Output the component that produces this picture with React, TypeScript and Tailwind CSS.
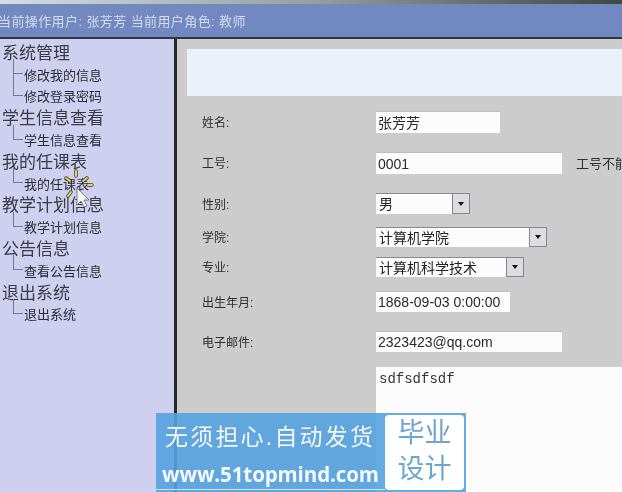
// Teacher info page: header strip, tree menu on the left, profile form on the right

const menu = [
  { title: "系统管理", items: ["修改我的信息", "修改登录密码"] },
  { title: "学生信息查看", items: ["学生信息查看"] },
  { title: "我的任课表", items: ["我的任课表"] },
  { title: "教学计划信息", items: ["教学计划信息"] },
  { title: "公告信息", items: ["查看公告信息"] },
  { title: "退出系统", items: ["退出系统"] },
];

function TreeItem({ label, first }: { label: string; first: boolean }) {
  return (
    <div className="relative h-[21.8px] pl-6 flex items-center text-[13px] leading-none text-[#2b2b33]">
      {/* tree connector */}
      <span
        className={
          first
            ? "absolute left-[13px] top-[-5px] h-[15px] w-[10px] border-l border-b border-[#777788]"
            : "absolute left-[13px] top-[-12px] h-[22px] w-[10px] border-l border-b border-[#777788]"
        }
      />
      <span>{label}</span>
    </div>
  );
}

function Sidebar() {
  return (
    <div className="w-[174px] shrink-0 bg-[#cfd0ef] pt-[3.5px] overflow-hidden">
      {menu.map((group) => (
        <div key={group.title}>
          <div className="h-[21.8px] pl-0.5 flex items-center text-[17px] leading-none text-[#3a3a44]">
            {group.title}
          </div>
          {group.items.map((item, i) => (
            <TreeItem key={item} label={item} first={i === 0} />
          ))}
        </div>
      ))}
    </div>
  );
}

function Label({ children }: { children: string }) {
  return <div className="w-[174px] shrink-0 pt-0.5 text-xs text-[#2e2e2e]">{children}</div>;
}

function Input({ value, width }: { value: string; width: string }) {
  return (
    <div className={`${width} shrink-0 h-full bg-[#fcfcfc] border-t border-[#bdbdbd] pl-0.5 flex items-center text-sm text-[#2a2a2a]`}>
      {value}
    </div>
  );
}

function Select({ value, width }: { value: string; width: string }) {
  return (
    <div className="flex h-full shrink-0">
      <div className={`${width} bg-[#fcfcfc] border-t border-[#8a8a8a] pl-[3px] flex items-center text-sm text-[#222]`}>
        {value}
      </div>
      <div className="w-[18px] bg-[#dcdce2] border border-[#85858d] flex items-center justify-center">
        <span className="w-0 h-0 border-x-[3px] border-x-transparent border-t-[4px] border-t-[#111]" />
      </div>
    </div>
  );
}

function Form() {
  return (
    <div className="flex-1 min-w-0 pl-2.5 pt-2.5 bg-[#cccccc] overflow-hidden">
      <div className="h-[47px] bg-[#eaf1f8]" />
      <div className="pl-[15px]">
        <div className="mt-[15px] h-[22px] flex items-center">
          <Label>姓名:</Label>
          <Input value="张芳芳" width="w-[124px]" />
        </div>
        <div className="mt-[19px] h-[22px] flex items-center">
          <Label>工号:</Label>
          <Input value="0001" width="w-[186px]" />
          <span className="ml-3.5 pt-0.5 text-[13px] whitespace-nowrap text-[#2e2e2e]">工号不能修改</span>
        </div>
        <div className="mt-[19px] h-[21px] flex items-center">
          <Label>性别:</Label>
          <Select value="男" width="w-[76px]" />
        </div>
        <div className="mt-[13px] h-5 flex items-center">
          <Label>学院:</Label>
          <Select value="计算机学院" width="w-[153px]" />
        </div>
        <div className="mt-2.5 h-5 flex items-center">
          <Label>专业:</Label>
          <Select value="计算机科学技术" width="w-[130px]" />
        </div>
        <div className="mt-3.5 h-[21px] flex items-center">
          <Label>出生年月:</Label>
          <Input value="1868-09-03 0:00:00" width="w-[134px]" />
        </div>
        <div className="mt-[19px] h-[21px] flex items-center">
          <Label>电子邮件:</Label>
          <Input value="2323423@qq.com" width="w-[186px]" />
        </div>
        <div className="mt-[15px] flex">
          <div className="w-[174px] shrink-0" />
          <div className="flex-1 h-[140px] bg-[#fcfcfc] pl-[3px] pt-0.5 font-['Liberation_Mono',monospace] text-sm leading-5 text-[#333]">
            sdfsdfsdf
          </div>
        </div>
      </div>
    </div>
  );
}

export default function App() {
  return (
    <div className="relative w-[622px] h-[492px] overflow-hidden flex flex-col bg-[#cccccc] blur-[0.5px] font-['Liberation_Sans','Noto_Sans_CJK_SC',sans-serif]">
      <div className="h-1 shrink-0 bg-gradient-to-r from-[#d5dee4] via-[#93a29f] to-[#3c4a44]" />
      <div className="h-[35px] shrink-0 bg-[#7288c0] border-b-2 border-[#2e3646] flex items-center overflow-hidden">
        <div className="ml-[-2px] pt-[3px] text-[13px] tracking-[0.4px] whitespace-nowrap text-[#d4dcf0]">当前操作用户:&nbsp;张芳芳 当前用户角色:&nbsp;教师</div>
      </div>
      <div className="flex-1 min-h-0 flex">
        <Sidebar />
        <div className="w-[3px] shrink-0 bg-[#26262c]" />
        <Form />
      </div>

      {/* mouse cursor with click sparkle over the menu */}
      <svg className="absolute left-[60px] top-[168px]" width="36" height="42" viewBox="0 0 36 42">
        <g strokeLinecap="round">
          <g stroke="#3a3a2a" strokeWidth="3.5">
            <path d="M16 3v5" />
            <path d="M6 10l4 3" />
            <path d="M27 10l-4 3" />
            <path d="M32 17h-4" />
            <path d="M8 28l3-4" />
          </g>
          <g stroke="#e6d65a" strokeWidth="2">
            <path d="M16 3v5" />
            <path d="M6 10l4 3" />
            <path d="M27 10l-4 3" />
            <path d="M32 17h-4" />
            <path d="M8 28l3-4" />
          </g>
        </g>
        <path d="M17 20v17l4-4 3 6 3-1-3-6h5z" fill="#f6f6fa" stroke="#66666f" strokeWidth="0.8" />
      </svg>

      {/* site watermark */}
      <div className="absolute left-[156px] top-[413px] w-[310px] h-[79px] bg-[#57a2e0]/90 flex">
        <div className="w-[229px] shrink-0 text-[#f4f8fc]">
          <div className="mt-2 pl-[9px] text-[23px] leading-8 tracking-[2.2px] whitespace-nowrap">无须担心.自动发货</div>
          <div className="mt-[9px] pl-[6px] h-[28px] text-[20.5px] leading-6 whitespace-nowrap font-bold font-['Open_Sans',sans-serif] tracking-[-0.1px] border-b border-[#cfe4f6]">
            www.51topmind.com
          </div>
        </div>
        <div className="my-0.5 w-[79px] rounded bg-white flex flex-col items-center justify-center pb-1 text-[#6ea5cc] text-[27px] leading-[36px]">
          <span>毕业</span>
          <span>设计</span>
        </div>
      </div>
    </div>
  );
}
